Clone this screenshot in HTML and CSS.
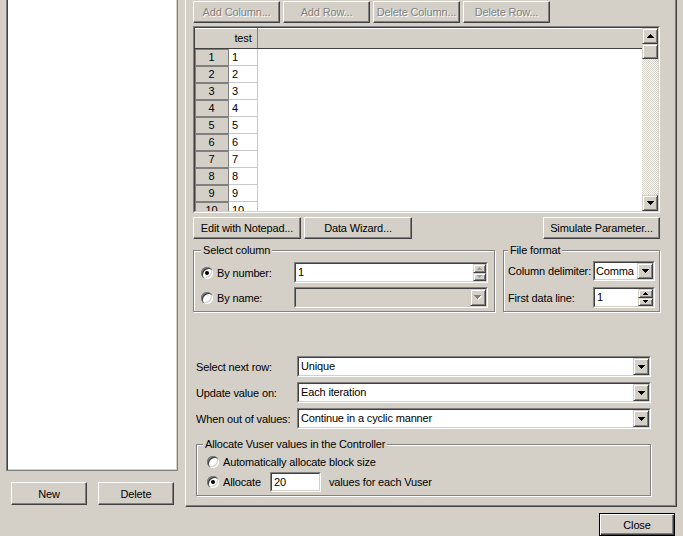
FILE: index.html
```html
<!DOCTYPE html>
<html>
<head>
<meta charset="utf-8">
<link rel="stylesheet" href="styles.css">
</head>
<body>
<div class="window">
  <div class="left">
    <div class="listbox"></div>
    <div class="left-btns">
      <button class="btn lb">New</button>
      <button class="btn lb">Delete</button>
    </div>
  </div>
  <div class="right">
    <div class="panel">
      <div class="toolbar">
        <button class="btn dis tb">Add Column...</button>
        <button class="btn dis tb">Add Row...</button>
        <button class="btn dis tb">Delete Column...</button>
        <button class="btn dis tb">Delete Row...</button>
      </div>
      <div class="grid">
        <div class="grid-in">
          <div class="grid-main">
            <div class="grid-head"><div class="h-corner"></div><div class="h-test">test</div></div>
            <div class="grow"><div class="rh">1</div><div class="cell">1</div></div>
            <div class="grow"><div class="rh">2</div><div class="cell">2</div></div>
            <div class="grow"><div class="rh">3</div><div class="cell">3</div></div>
            <div class="grow"><div class="rh">4</div><div class="cell">4</div></div>
            <div class="grow"><div class="rh">5</div><div class="cell">5</div></div>
            <div class="grow"><div class="rh">6</div><div class="cell">6</div></div>
            <div class="grow"><div class="rh">7</div><div class="cell">7</div></div>
            <div class="grow"><div class="rh">8</div><div class="cell">8</div></div>
            <div class="grow"><div class="rh">9</div><div class="cell">9</div></div>
            <div class="grow"><div class="rh">10</div><div class="cell">10</div></div>
          </div>
          <div class="vscroll">
            <div class="raised sb-btn"><svg width="7" height="4" viewBox="0 0 7 4"><path d="M3 0h1v1H3zM2 1h3v1H2zM1 2h5v1H1zM0 3h7v1H0z"/></svg></div>
            <div class="raised sb-thumb"></div>
            <div class="sb-track"></div>
            <div class="raised sb-btn"><svg width="7" height="4" viewBox="0 0 7 4"><path d="M0 0h7v1H0zM1 1h5v1H1zM2 2h3v1H2zM3 3h1v1H3z"/></svg></div>
          </div>
        </div>
      </div>
      <div class="btnrow">
        <button class="btn b108">Edit with Notepad...</button>
        <button class="btn b108">Data Wizard...</button>
        <button class="btn b117">Simulate Parameter...</button>
      </div>
      <div class="groups">
        <div class="group g-select">
          <span class="legend">Select column</span>
          <div class="opt-row">
            <div class="radio-lbl"><span class="radio on"></span>By number:</div>
            <div class="sunk f194"><div class="in">
              <span class="val">1</span>
              <div class="spin">
                <div class="raised sp-btn"><svg width="5" height="3" viewBox="0 0 5 3" class="gray"><path d="M2 0h1v1H2zM1 1h3v1H1zM0 2h5v1H0z"/></svg></div>
                <div class="raised sp-btn"><svg width="5" height="3" viewBox="0 0 5 3" class="gray"><path d="M0 0h5v1H0zM1 1h3v1H1zM2 2h1v1H2z"/></svg></div>
              </div>
            </div></div>
          </div>
          <div class="opt-row r2">
            <div class="radio-lbl"><span class="radio"></span>By name:</div>
            <div class="sunk f194"><div class="in disabled">
              <span class="val"></span>
              <div class="raised dd-btn"><svg width="8" height="5" viewBox="0 0 8 5"><path fill="#fff" d="M1 1h7v1H1zM2 2h5v1H2zM3 3h3v1H3zM4 4h1v1H4z"/><path fill="#808080" d="M0 0h7v1H0zM1 1h5v1H1zM2 2h3v1H2zM3 3h1v1H3z"/></svg></div>
            </div></div>
          </div>
        </div>
        <div class="group g-file">
          <span class="legend">File format</span>
          <div class="ff-row">
            <span class="ff-lbl">Column delimiter:</span>
            <div class="sunk f62 h20"><div class="in">
              <span class="val tight">Comma</span>
              <div class="raised dd-btn"><svg width="7" height="4" viewBox="0 0 7 4"><path d="M0 0h7v1H0zM1 1h5v1H1zM2 2h3v1H2zM3 3h1v1H3z"/></svg></div>
            </div></div>
          </div>
          <div class="ff-row r2">
            <span class="ff-lbl">First data line:</span>
            <div class="sunk f62"><div class="in">
              <span class="val">1</span>
              <div class="spin w15">
                <div class="raised sp-btn"><svg width="5" height="3" viewBox="0 0 5 3"><path d="M2 0h1v1H2zM1 1h3v1H1zM0 2h5v1H0z"/></svg></div>
                <div class="raised sp-btn"><svg width="5" height="3" viewBox="0 0 5 3"><path d="M0 0h5v1H0zM1 1h3v1H1zM2 2h1v1H2z"/></svg></div>
              </div>
            </div></div>
          </div>
        </div>
      </div>
      <div class="combos">
        <div class="crow">
          <span class="c-lbl">Select next row:</span>
          <div class="sunk f354"><div class="in">
            <span class="val">Unique</span>
            <div class="raised dd-btn"><svg width="7" height="4" viewBox="0 0 7 4"><path d="M0 0h7v1H0zM1 1h5v1H1zM2 2h3v1H2zM3 3h1v1H3z"/></svg></div>
          </div></div>
        </div>
        <div class="crow">
          <span class="c-lbl">Update value on:</span>
          <div class="sunk f354"><div class="in">
            <span class="val">Each iteration</span>
            <div class="raised dd-btn"><svg width="7" height="4" viewBox="0 0 7 4"><path d="M0 0h7v1H0zM1 1h5v1H1zM2 2h3v1H2zM3 3h1v1H3z"/></svg></div>
          </div></div>
        </div>
        <div class="crow">
          <span class="c-lbl">When out of values:</span>
          <div class="sunk f354"><div class="in">
            <span class="val">Continue in a cyclic manner</span>
            <div class="raised dd-btn"><svg width="7" height="4" viewBox="0 0 7 4"><path d="M0 0h7v1H0zM1 1h5v1H1zM2 2h3v1H2zM3 3h1v1H3z"/></svg></div>
          </div></div>
        </div>
      </div>
      <div class="group g-alloc">
        <span class="legend">Allocate Vuser values in the Controller</span>
        <div class="a-row">
          <div class="radio-lbl"><span class="radio"></span>Automatically allocate block size</div>
        </div>
        <div class="a-row r2">
          <div class="radio-lbl w63"><span class="radio on"></span>Allocate</div>
          <div class="sunk f51"><div class="in"><span class="val">20</span></div></div>
          <span class="after">values for each Vuser</span>
        </div>
      </div>
    </div>
    <div class="close-row"><button class="btn default">Close</button></div>
  </div>
</div>
</body>
</html>
```

FILE: styles.css
```css
* { box-sizing: border-box; }

body {
  margin: 0;
  width: 683px;
  height: 536px;
  overflow: hidden;
  background: #d4d0c8;
  font-family: "Liberation Sans", Arial, sans-serif;
  font-size: 11px;
  letter-spacing: -0.15px;
  color: #000;
}

.window { display: flex; }

/* ---------- generic widgets ---------- */
.btn {
  font: inherit;
  letter-spacing: inherit;
  color: #000;
  margin: 0;
  padding: 0;
  height: 22px;
  background: #d4d0c8;
  border: 1px solid;
  border-color: #fff #404040 #404040 #fff;
  box-shadow: inset -1px -1px 0 #808080;
  flex: none;
}
.btn.dis {
  color: #808080;
  text-shadow: 1px 1px 0 #fff;
}
.btn.default {
  border-color: #000;
  box-shadow: inset 1px 1px 0 #fff, inset -1px -1px 0 #404040, inset -2px -2px 0 #808080;
}

.raised {
  background: #d4d0c8;
  border: 1px solid;
  border-color: #d4d0c8 #404040 #404040 #d4d0c8;
  box-shadow: inset 1px 1px 0 #fff, inset -1px -1px 0 #808080;
}

.sunk {
  border: 1px solid;
  border-color: #808080 #fff #fff #808080;
  height: 21px;
  flex: none;
}
.sunk > .in {
  height: 100%;
  border: 1px solid;
  border-color: #404040 #d4d0c8 #d4d0c8 #404040;
  background: #fff;
  display: flex;
  align-items: stretch;
}
.sunk > .in.disabled { background: #d4d0c8; }
.val {
  flex: 1;
  padding-left: 2px;
  line-height: 17px;
  white-space: nowrap;
  overflow: hidden;
}
.h20 .val { line-height: 16px; }
.val.tight { padding-left: 1px; }

.dd-btn {
  width: 16px;
  flex: none;
  display: flex;
  align-items: center;
  justify-content: center;
}

.spin {
  width: 13px;
  flex: none;
  display: flex;
  flex-direction: column;
}
.spin.w15 { width: 15px; }
.sp-btn {
  flex: 1;
  display: flex;
  align-items: center;
  justify-content: center;
}
svg.gray path { fill: #a0a0a0; }

.radio {
  position: relative;
  width: 12px;
  height: 12px;
  flex: none;
  border-radius: 50%;
  background: #fff;
  box-shadow: inset 1px 1px 0 #808080, inset 2px 2px 0 #404040, inset -1px -1px 0 #fff, inset -2px -2px 0 #d4d0c8;
}
.radio.on::after {
  content: "";
  position: absolute;
  left: 4px;
  top: 4px;
  width: 4px;
  height: 4px;
  border-radius: 50%;
  background: #000;
}

.group {
  position: relative;
  border: 1px solid #808080;
  box-shadow: inset 1px 1px 0 #fff, 1px 1px 0 #fff;
  flex: none;
}
.legend {
  position: absolute;
  top: -7px;
  left: 7px;
  padding: 0 2px;
  line-height: 13px;
  background: #d4d0c8;
  white-space: nowrap;
}

/* ---------- left column ---------- */
.left { width: 185px; flex: none; }
.listbox {
  margin-left: 6px;
  width: 172px;
  height: 471px;
  background: #fff;
  border: 1px solid #808080;
  border-top: 0;
  box-shadow: inset 1px 0 0 #404040, inset -1px -1px 0 #d4d0c8;
}
.left-btns {
  display: flex;
  gap: 11px;
  margin: 11px 0 0 11px;
}
.btn.lb { width: 76px; height: 23px; }

/* ---------- right panel ---------- */
.right { width: 492px; flex: none; }
.panel {
  width: 492px;
  height: 507px;
  border-left: 1px solid #fff;
  border-right: 1px solid #404040;
  border-bottom: 1px solid #404040;
  box-shadow: inset -1px -1px 0 #808080;
  padding: 0 16px 0 7px;
  display: flex;
  flex-direction: column;
}

.toolbar { display: flex; gap: 3px; margin-top: 1px; }
.btn.tb { width: 87px; }

/* grid */
.grid {
  margin-top: 3px;
  height: 187px;
  flex: none;
  border: 1px solid;
  border-color: #808080 #fff #fff #808080;
}
.grid-in {
  height: 100%;
  border: 1px solid;
  border-color: #404040 #d4d0c8 #d4d0c8 #404040;
  background: #fff;
  display: flex;
}
.grid-main { flex: 1; overflow: hidden; }
.grid-head {
  display: flex;
  height: 21px;
  background: #d4d0c8;
  border-bottom: 1px solid #404040;
  box-shadow: inset 0 1px 0 #fff;
}
.h-corner { width: 34px; }
.h-test {
  width: 29px;
  border-right: 1px solid #808080;
  text-align: center;
  line-height: 20px;
}
.grow { display: flex; height: 17px; }
.rh {
  width: 34px;
  background: #d4d0c8;
  border-right: 1px solid #808080;
  border-bottom: 1px solid #808080;
  box-shadow: inset 1px 1px 0 #808080;
  text-align: center;
  line-height: 16px;
}
.cell {
  width: 29px;
  border-right: 1px solid #c8c8c8;
  border-bottom: 1px solid #c8c8c8;
  padding-left: 3px;
  line-height: 16px;
}
.vscroll {
  width: 16px;
  flex: none;
  display: flex;
  flex-direction: column;
}
.sb-btn {
  height: 16px;
  display: flex;
  align-items: center;
  justify-content: center;
}
.sb-thumb { height: 15px; }
.sb-track {
  flex: 1;
  background: repeating-conic-gradient(#d4d0c8 0 25%, #fff 0 50%) 0 0 / 2px 2px;
}

.btnrow { display: flex; gap: 3px; margin-top: 4px; }
.btn.b108 { width: 108px; }
.btn.b117 { width: 117px; margin-left: auto; }

/* group boxes */
.groups { display: flex; gap: 8px; margin-top: 11px; }
.g-select { width: 302px; height: 62px; padding: 11px 6px 0 7px; }
.g-file { width: 157px; height: 62px; padding: 10px 4px 0 4px; }
.g-file .legend { left: 4px; }

.opt-row { display: flex; align-items: center; height: 21px; }
.opt-row.r2 { margin-top: 4px; }
.radio-lbl {
  width: 93px;
  display: flex;
  align-items: center;
  gap: 4px;
  white-space: nowrap;
}
.radio-lbl.w63 { width: 63px; }
.f194 { width: 194px; }
.f62 { width: 62px; }
.f62.h20 { height: 20px; }
.f354 { width: 354px; }
.f51 { width: 51px; height: 20px; }
.f51 .val { line-height: 16px; }

.ff-row { display: flex; align-items: center; height: 20px; }
.ff-row.r2 { margin-top: 6px; height: 21px; }
.ff-lbl { width: 85px; white-space: nowrap; }

.combos {
  margin-top: 44px;
  padding-left: 3px;
  display: flex;
  flex-direction: column;
  gap: 5px;
}
.crow { display: flex; align-items: center; height: 21px; }
.c-lbl { width: 101px; white-space: nowrap; }

.g-alloc {
  margin-top: 15px;
  margin-left: 3px;
  width: 455px;
  height: 52px;
  padding: 9px 0 0 10px;
}
.g-alloc .legend { left: 6px; }
.a-row { display: flex; align-items: center; height: 16px; }
.a-row.r2 { margin-top: 2px; height: 20px; }
.a-row .radio-lbl { width: auto; }
.a-row .radio-lbl.w63 { width: 63px; }
.after { margin-left: 8px; white-space: nowrap; }

.close-row {
  display: flex;
  justify-content: flex-end;
  padding-right: 2px;
  margin-top: 6px;
}
.btn.default { width: 76px; height: 23px; }
```
